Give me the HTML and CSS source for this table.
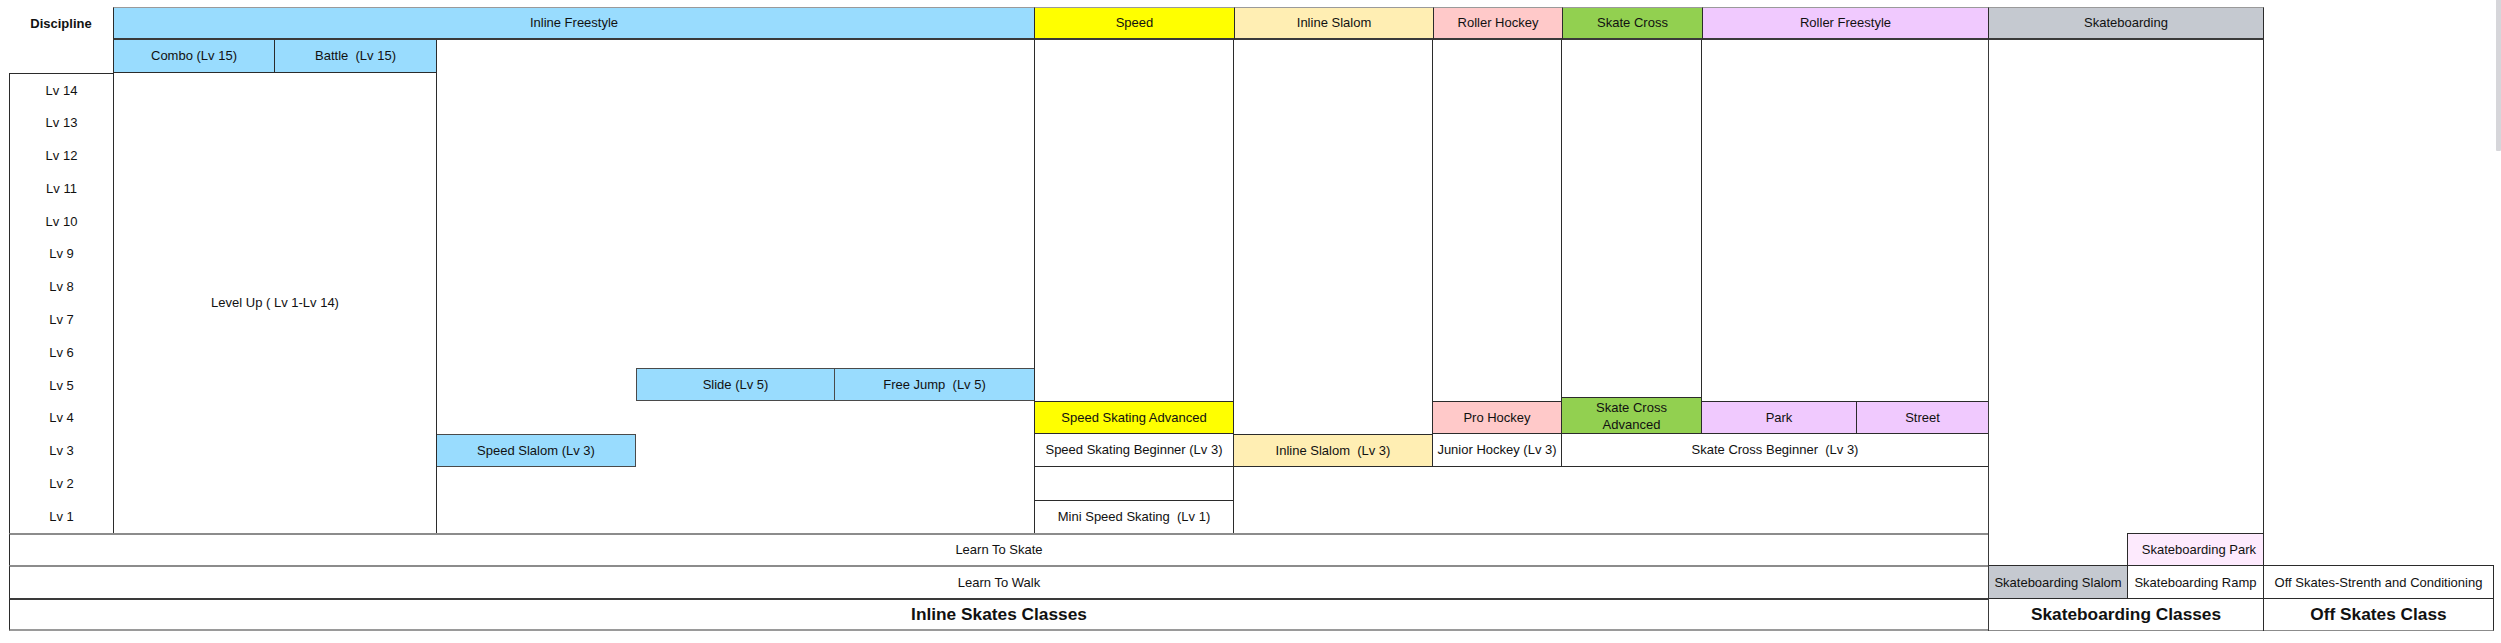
FILE: index.html
```html
<!DOCTYPE html>
<html>
<head>
<meta charset="utf-8">
<title>Discipline levels</title>
<link rel="stylesheet" href="styles.css">
</head>
<body>
<div class="sheet">
  <div class="disc">Discipline</div>
  <div class="hd hd-free">Inline Freestyle</div>
  <div class="hd hd-speed">Speed</div>
  <div class="hd hd-islalom">Inline Slalom</div>
  <div class="hd hd-hockey">Roller Hockey</div>
  <div class="hd hd-cross">Skate Cross</div>
  <div class="hd hd-rfree">Roller Freestyle</div>
  <div class="hd hd-skateb">Skateboarding</div>

  <div class="cell blue combo">Combo (Lv 15)</div>
  <div class="cell blue battle">Battle  (Lv 15)</div>

  <div class="lvcol">
    <div class="lv">Lv 14</div>
    <div class="lv">Lv 13</div>
    <div class="lv">Lv 12</div>
    <div class="lv">Lv 11</div>
    <div class="lv">Lv 10</div>
    <div class="lv">Lv 9</div>
    <div class="lv">Lv 8</div>
    <div class="lv">Lv 7</div>
    <div class="lv">Lv 6</div>
    <div class="lv">Lv 5</div>
    <div class="lv">Lv 4</div>
    <div class="lv">Lv 3</div>
    <div class="lv">Lv 2</div>
    <div class="lv">Lv 1</div>
  </div>
  <div class="cell levelup">Level Up ( Lv 1-Lv 14)</div>
  <div class="cell blue slide">Slide (Lv 5)</div>
  <div class="cell blue freejump">Free Jump  (Lv 5)</div>
  <div class="cell blue sslalom">Speed Slalom (Lv 3)</div>

  <div class="col col-speed">
    <div class="cell yellow ss-adv">Speed Skating Advanced</div>
    <div class="cell ss-beg">Speed Skating Beginner (Lv 3)</div>
    <div class="cell ss-mini">Mini Speed Skating  (Lv 1)</div>
  </div>
  <div class="col col-islalom">
    <div class="cell tan is-l3">Inline Slalom  (Lv 3)</div>
  </div>
  <div class="col col-hockey">
    <div class="cell pink pro">Pro Hockey</div>
    <div class="cell junior">Junior Hockey (Lv 3)</div>
  </div>
  <div class="col col-cross">
    <div class="cell green sc-adv">Skate Cross<br>Advanced</div>
  </div>
  <div class="col col-rfree">
    <div class="cell lav park">Park</div>
    <div class="cell lav street">Street</div>
  </div>
  <div class="cell sc-beg">Skate Cross Beginner  (Lv 3)</div>

  <div class="col col-skateb">
    <div class="cell rose sb-park">Skateboarding Park</div>
    <div class="cell grey sb-slalom">Skateboarding Slalom</div>
    <div class="cell sb-ramp">Skateboarding Ramp</div>
    <div class="cell big sb-classes">Skateboarding Classes</div>
  </div>

  <div class="cell lts">Learn To Skate</div>
  <div class="cell ltw">Learn To Walk</div>
  <div class="cell big isc">Inline Skates Classes</div>

  <div class="cell offs">Off Skates-Strenth and Conditioning</div>
  <div class="cell big offc">Off Skates Class</div>
</div>
<div class="scrollbar"></div>
</body>
</html>
```

FILE: styles.css
```css
* { box-sizing: border-box; }

html, body {
  margin: 0;
  background: #ffffff;
}

body {
  position: relative;
  font-family: "Liberation Sans", Arial, sans-serif;
  font-size: 13px;
  color: #111111;
  width: 2501px;
  height: 643px;
  overflow: hidden;
}

.sheet {
  display: grid;
  margin: 7px 0 0 9px;
  width: 2485px;
  grid-template-columns: 104px 162px 162px 199px 199px 199px 200px 199px 129px 140px 155px 131px 139px 137px 230px;
  grid-template-rows: repeat(19, 32.85px);
}

.cell, .hd, .disc, .lv {
  display: flex;
  align-items: center;
  justify-content: center;
  text-align: center;
  white-space: pre;
  overflow: visible;
}

/* colours */
.blue { background: #99dcfe; }
.yellow { background: #ffff00; }
.tan { background: #ffeeb3; }
.pink { background: #ffc9c9; }
.green { background: #92d050; }
.lav { background: #f0c9fe; }
.grey { background: #c5c9d0; }
.rose { background: #fdeafd; }

.big {
  font-weight: bold;
  font-size: 17.3px;
}

/* header row */
.disc {
  grid-column: 1;
  grid-row: 1;
  font-weight: bold;
}

.hd {
  grid-row: 1;
  border-top: 1px solid #9a9a9a;
  border-bottom: 2px solid #3a3a3a;
  border-left: 1px solid #2b2b2b;
}
.hd-free { grid-column: 2 / 7; background: #99dcfe; }
.hd-speed { grid-column: 7; background: #ffff00; }
.hd-islalom { grid-column: 8; background: #ffeeb3; }
.hd-hockey { grid-column: 9; background: #ffc9c9; }
.hd-cross { grid-column: 10; background: #92d050; }
.hd-rfree { grid-column: 11 / 13; background: #f0c9fe; }
.hd-skateb { grid-column: 13 / 15; background: #c5c9d0; border-right: 1px solid #2b2b2b; }

/* inline freestyle */
.combo {
  grid-column: 2;
  grid-row: 2;
  border-left: 1px solid #2b2b2b;
  border-right: 1px solid #2b2b2b;
  border-bottom: 1px solid #2b2b2b;
}
.battle {
  grid-column: 3;
  grid-row: 2;
  border-right: 1px solid #2b2b2b;
  border-bottom: 1px solid #2b2b2b;
}

.lvcol {
  grid-column: 1;
  grid-row: 3 / 17;
  display: grid;
  grid-template-rows: repeat(14, 1fr);
  border-left: 1px solid #2b2b2b;
  border-top: 1px solid #2b2b2b;
}

.levelup {
  grid-column: 2 / 4;
  grid-row: 3 / 17;
  border-left: 1px solid #2b2b2b;
  border-right: 1px solid #2b2b2b;
}

.slide {
  grid-column: 5;
  grid-row: 12;
  border: 1px solid #4a4a4a;
}
.freejump {
  grid-column: 6;
  grid-row: 12;
  border-top: 1px solid #4a4a4a;
  border-bottom: 1px solid #4a4a4a;
}
.sslalom {
  grid-column: 4;
  grid-row: 14;
  border-top: 1px solid #4a4a4a;
  border-bottom: 1px solid #4a4a4a;
  border-right: 1px solid #4a4a4a;
}

/* discipline columns */
.col {
  display: grid;
}

.col-speed {
  grid-column: 7;
  grid-row: 2 / 17;
  grid-template-rows: repeat(15, 1fr);
  border-left: 1px solid #2b2b2b;
  border-right: 1px solid #2b2b2b;
}
.ss-adv { grid-row: 12; border-top: 1px solid #2b2b2b; border-bottom: 1px solid #2b2b2b; }
.ss-beg { grid-row: 13; border-bottom: 1px solid #2b2b2b; }
.ss-mini { grid-row: 15; border-top: 1px solid #2b2b2b; }

.col-islalom {
  grid-column: 8;
  grid-row: 2 / 15;
  grid-template-rows: repeat(13, 1fr);
  border-right: 1px solid #2b2b2b;
}
.is-l3 { grid-row: 13; border-top: 1px solid #2b2b2b; border-bottom: 1px solid #2b2b2b; }

.col-hockey {
  grid-column: 9;
  grid-row: 2 / 15;
  grid-template-rows: repeat(13, 1fr);
  border-right: 1px solid #2b2b2b;
}
.pro { grid-row: 12; border-top: 1px solid #2b2b2b; border-bottom: 1px solid #2b2b2b; }
.junior { grid-row: 13; border-bottom: 1px solid #2b2b2b; }

.col-cross {
  grid-column: 10;
  grid-row: 2 / 14;
  grid-template-rows: repeat(12, 1fr);
  border-right: 1px solid #2b2b2b;
}
.sc-adv {
  grid-row: 12;
  border-top: 1px solid #2b2b2b;
  border-bottom: 1px solid #2b2b2b;
  white-space: normal;
  line-height: 17px;
  padding-top: 1px;
}

.col-rfree {
  grid-column: 11 / 13;
  grid-row: 2 / 14;
  grid-template-rows: repeat(12, 1fr);
  grid-template-columns: 155px 1fr;
}
.park { grid-column: 1; grid-row: 12; border-top: 1px solid #2b2b2b; border-bottom: 1px solid #2b2b2b; border-right: 1px solid #2b2b2b; }
.street { grid-column: 2; grid-row: 12; border-top: 1px solid #2b2b2b; border-bottom: 1px solid #2b2b2b; }

.sc-beg {
  grid-column: 10 / 13;
  grid-row: 14;
  border-bottom: 1px solid #2b2b2b;
}

.col-skateb {
  grid-column: 13 / 15;
  grid-row: 2 / 20;
  grid-template-rows: repeat(18, 1fr);
  grid-template-columns: 138px 1fr;
  border-left: 1px solid #3a3a3a;
  border-right: 1px solid #2b2b2b;
}
.sb-park {
  grid-column: 2;
  grid-row: 16;
  border-top: 1px solid #2b2b2b;
  border-left: 1px solid #2b2b2b;
  justify-content: flex-end;
  padding-right: 7px;
}
.sb-slalom {
  grid-column: 1;
  grid-row: 17;
  border-top: 1px solid #2b2b2b;
}
.sb-ramp {
  grid-column: 2;
  grid-row: 17;
  border-top: 1px solid #2b2b2b;
  border-left: 1px solid #2b2b2b;
}
.sb-classes {
  grid-column: 1 / 3;
  grid-row: 18;
  border-top: 1px solid #2b2b2b;
  border-bottom: 1px solid #8c8c8c;
}

/* bottom rows */
.lts {
  grid-column: 1 / 13;
  grid-row: 17;
  border-top: 2px solid #8c8c8c;
  border-left: 1px solid #2b2b2b;
}
.ltw {
  grid-column: 1 / 13;
  grid-row: 18;
  border-top: 2px solid #8c8c8c;
  border-left: 1px solid #2b2b2b;
}
.isc {
  grid-column: 1 / 13;
  grid-row: 19;
  border-top: 2px solid #3a3a3a;
  border-bottom: 2px solid #9a9a9a;
  border-left: 1px solid #2b2b2b;
}

.offs {
  grid-column: 15;
  grid-row: 18;
  border-top: 1px solid #2b2b2b;
  border-right: 1px solid #2b2b2b;
}
.offc {
  grid-column: 15;
  grid-row: 19;
  border-top: 1px solid #2b2b2b;
  border-right: 1px solid #2b2b2b;
  border-bottom: 1px solid #8c8c8c;
}

.scrollbar {
  position: absolute;
  top: 0;
  right: 0;
  width: 5px;
  height: 151px;
  background: #d6d6da;
  border-radius: 0 0 1px 1px;
}
```
